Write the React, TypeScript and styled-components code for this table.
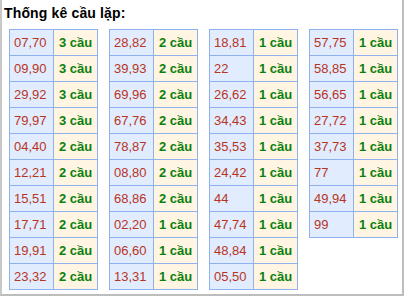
import React from 'react';
import styled, { createGlobalStyle } from 'styled-components';

const GlobalStyle = createGlobalStyle`
  html, body {
    margin: 0;
    padding: 0;
    background: #ffffff;
  }
  body {
    font-family: Arial, 'Liberation Sans', sans-serif;
  }
`;

const Box = styled.div`
  box-sizing: border-box;
  width: 404px;
  height: 296px;
  border-left: 2px solid #c8c8c8;
  border-right: 2px solid #bdbdbd;
  border-bottom: 2px solid #bdbdbd;
  background: #ffffff;
  padding: 5px 0 0 2px;
`;

const Title = styled.div`
  font-size: 14px;
  line-height: 16px;
  font-weight: bold;
  color: #000000;
  margin-bottom: 8px;
  letter-spacing: 0.15px;
`;

const Columns = styled.div`
  display: flex;
  align-items: flex-start;
  gap: 11px;
  padding-left: 5px;
`;

const Table = styled.table`
  border-collapse: collapse;
  table-layout: fixed;
  width: 88px;
  font-size: 13px;

  td {
    border: 1px solid #8fb1ee;
    height: 26px;
    padding: 0 0 0 4px;
    box-sizing: border-box;
    white-space: nowrap;
    line-height: 15px;
  }
`;

const Pair = styled.td`
  width: 44px;
  background: #e1ecff;
  color: #b8351d;
`;

const Count = styled.td`
  width: 44px;
  background: #fff5e2;
  color: #0b800b;
  font-weight: bold;
  && {
    padding-left: 5px;
  }
`;

type Row = [string, number];

const columns: Row[][] = [
  [
    ['07,70', 3],
    ['09,90', 3],
    ['29,92', 3],
    ['79,97', 3],
    ['04,40', 2],
    ['12,21', 2],
    ['15,51', 2],
    ['17,71', 2],
    ['19,91', 2],
    ['23,32', 2],
  ],
  [
    ['28,82', 2],
    ['39,93', 2],
    ['69,96', 2],
    ['67,76', 2],
    ['78,87', 2],
    ['08,80', 2],
    ['68,86', 2],
    ['02,20', 1],
    ['06,60', 1],
    ['13,31', 1],
  ],
  [
    ['18,81', 1],
    ['22', 1],
    ['26,62', 1],
    ['34,43', 1],
    ['35,53', 1],
    ['24,42', 1],
    ['44', 1],
    ['47,74', 1],
    ['48,84', 1],
    ['05,50', 1],
  ],
  [
    ['57,75', 1],
    ['58,85', 1],
    ['56,65', 1],
    ['27,72', 1],
    ['37,73', 1],
    ['77', 1],
    ['49,94', 1],
    ['99', 1],
  ],
];

export default function App() {
  return (
    <>
      <GlobalStyle />
      <Box>
        <Title>Thống kê cầu lặp:</Title>
        <Columns>
          {columns.map((rows, i) => (
            <Table key={i}>
              <tbody>
                {rows.map(([pair, n]) => (
                  <tr key={pair}>
                    <Pair>{pair}</Pair>
                    <Count>{n} cầu</Count>
                  </tr>
                ))}
              </tbody>
            </Table>
          ))}
        </Columns>
      </Box>
    </>
  );
}
